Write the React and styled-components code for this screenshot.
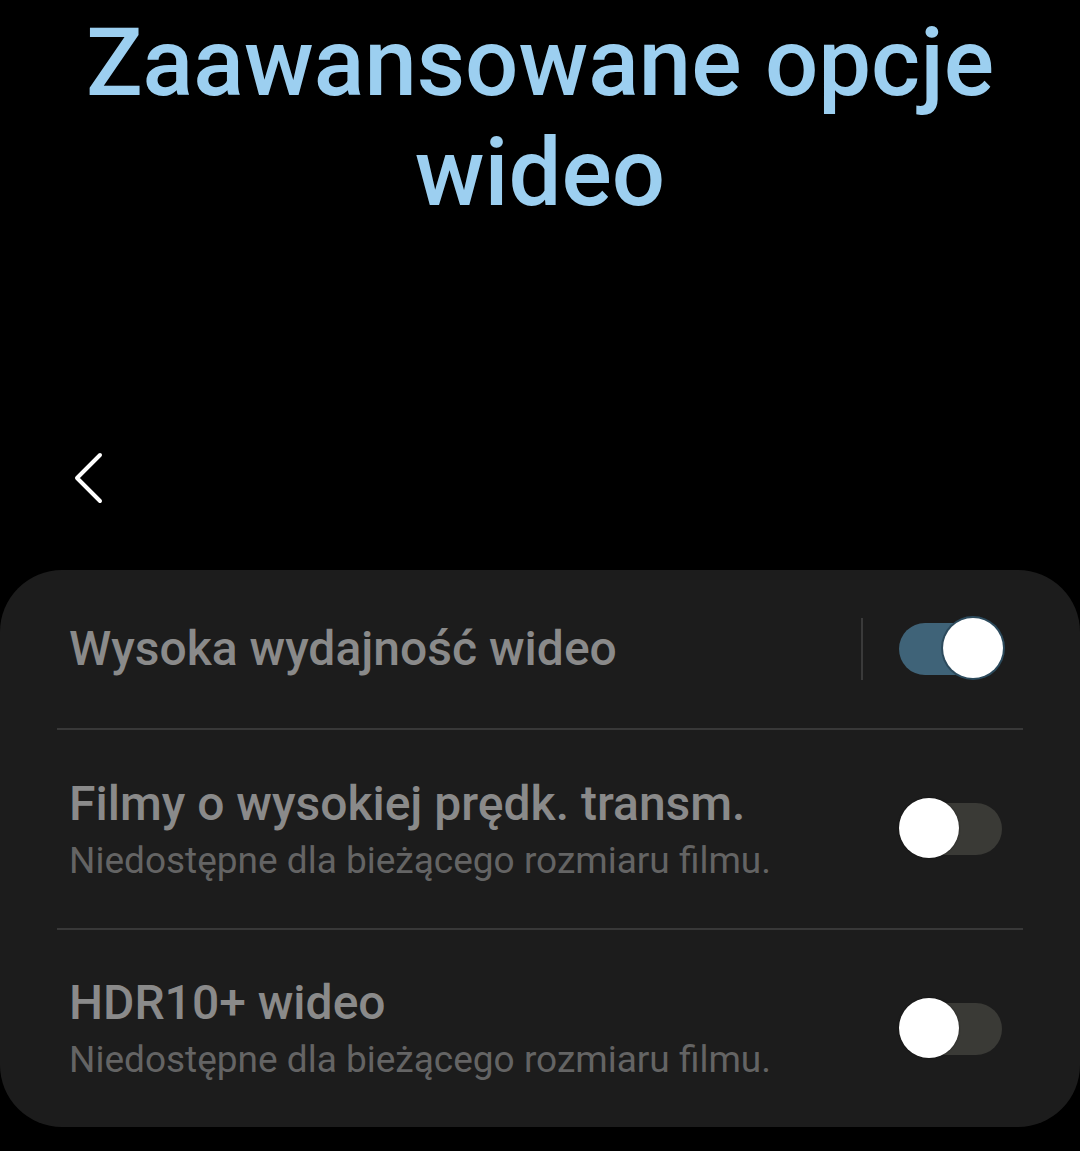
import React from 'react'
import styled, { createGlobalStyle } from 'styled-components'

const GlobalStyle = createGlobalStyle`
html, body {
  margin:0;
  padding:0;
  background:#000;
}
body {
  font-family: Roboto, "Noto Sans", sans-serif;
  width:1080px;
  height:1151px;
  overflow:hidden;
}
`

const Page = styled.div`
width:1080px;
height:1151px;
background:#000;
display:flex;
flex-direction:column;
`
const Title = styled.h1`
margin:8px 0 0;
font-size:94px;
line-height:110px;
font-weight:500;
color:#9ccff0;
text-align:center;
`
const BackBar = styled.div`
height:118px;
margin-top:200px;
padding:24px 0 0 72px;
display:flex;
align-items:flex-start;
`
const BackButton = styled.button`
background:none;
border:none;
padding:0;
display:flex;
width:34px;
height:54px;
cursor:pointer;
`
const Card = styled.section`
background:#1c1c1c;
border-radius:62px;
height:557px;
display:flex;
flex-direction:column;
`
const Row = styled.div`
height:${p => p.h}px;
padding:0 78px 0 69px;
display:flex;
align-items:center;
gap:20px;
`
const Texts = styled.div`
flex:1;
display:flex;
flex-direction:column;
padding-top:${p => (p.shift ? 7 : 0)}px;
`
const Label = styled.div`
font-size:48px;
font-weight:500;
color:#8a8a8a;
line-height:56px;
`
const Sub = styled.div`
font-size:37px;
color:#646464;
line-height:58px;
`
const Divider = styled.div`
height:2px;
margin:0 57px;
background:#383838;
`
const VBar = styled.div`
width:2px;
height:62px;
background:#3a3a3a;
margin-right:16px;
`
const Track = styled.div`
position:relative;
width:103px;
height:52px;
border-radius:26px;
background:${p => (p.on ? '#3f6378' : '#3a3a36')};
`
const Thumb = styled.div`
position:absolute;
top:-5px;
${p => (p.on ? 'right:-1px;' : 'left:0;')}
width:60px;
height:60px;
border-radius:50%;
background:#fff;
box-shadow:${p => (p.on ? '0 0 0 2px #2c4a5c' : '0 0 2px rgba(0,0,0,.5)')};
`

const Toggle = ({ on }) => (
    <Track on={on}>
        <Thumb on={on} />
    </Track>
)

export default () => {
    return (
        <Page>
            <GlobalStyle />
            <Title>Zaawansowane opcje<br />wideo</Title>
            <BackBar>
                <BackButton aria-label="Wstecz">
                    <svg width="34" height="54" viewBox="0 0 34 54">
                        <path d="M28 3 L5 26 L28 49" fill="none" stroke="#fff" strokeWidth="4" strokeLinecap="round" strokeLinejoin="round" />
                    </svg>
                </BackButton>
            </BackBar>
            <Card>
                <Row h={158}>
                    <Texts>
                        <Label>Wysoka wydajność wideo</Label>
                    </Texts>
                    <VBar />
                    <Toggle on />
                </Row>
                <Divider />
                <Row h={198}>
                    <Texts shift>
                        <Label>Filmy o wysokiej prędk. transm.</Label>
                        <Sub>Niedostępne dla bieżącego rozmiaru filmu.</Sub>
                    </Texts>
                    <Toggle />
                </Row>
                <Divider />
                <Row h={197}>
                    <Texts shift>
                        <Label>HDR10+ wideo</Label>
                        <Sub>Niedostępne dla bieżącego rozmiaru filmu.</Sub>
                    </Texts>
                    <Toggle />
                </Row>
            </Card>
        </Page>
    )
}
